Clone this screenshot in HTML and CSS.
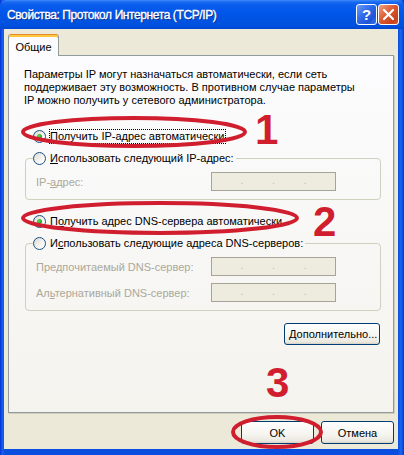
FILE: index.html
```html
<!DOCTYPE html>
<html lang="ru">
<head>
<meta charset="utf-8">
<title>Свойства: Протокол Интернета (TCP/IP)</title>
<link rel="stylesheet" href="styles.css">
</head>
<body>
<div class="window">
  <div class="titlebar">
    <span class="title">Свойства: Протокол Интернета (TCP/IP)</span>
    <div class="title-buttons">
      <span class="tbtn help">?</span>
      <span class="tbtn close"><svg width="13" height="13" viewBox="0 0 13 13"><path d="M2 2 L11 11 M11 2 L2 11" stroke="#fff" stroke-width="2.2" stroke-linecap="round"/></svg></span>
    </div>
  </div>
  <div class="client">
    <div class="tabs"><span class="tab">Общие</span></div>
    <div class="panel">
      <p class="intro">Параметры IP могут назначаться автоматически, если сеть<br>поддерживает эту возможность. В противном случае параметры<br>IP можно получить у сетевого администратора.</p>

      <div class="radio-row first"><span class="radio checked"></span><span class="label focus"><u>П</u>олучить IP-адрес автоматически</span></div>

      <fieldset class="group">
        <legend class="radio-row"><span class="radio"></span><span class="label"><u>И</u>спользовать следующий IP-адрес:</span></legend>
        <div class="field-row one"><span class="flabel">IP-<u>а</u>дрес:</span><span class="ipbox"><i>.</i><i>.</i><i>.</i></span></div>
      </fieldset>

      <div class="radio-row third"><span class="radio checked"></span><span class="label">П<u>о</u>лучить адрес DNS-сервера автоматически</span></div>

      <fieldset class="group">
        <legend class="radio-row"><span class="radio"></span><span class="label">И<u>с</u>пользовать следующие адреса DNS-серверов:</span></legend>
        <div class="field-row one"><span class="flabel">Пре<u>д</u>почитаемый DNS-сервер:</span><span class="ipbox"><i>.</i><i>.</i><i>.</i></span></div>
        <div class="field-row two"><span class="flabel">Ал<u>ь</u>тернативный DNS-сервер:</span><span class="ipbox"><i>.</i><i>.</i><i>.</i></span></div>
      </fieldset>

      <div class="adv-row"><button class="btn adv"><u>Д</u>ополнительно...</button></div>
    </div>
    <div class="dialog-buttons">
      <button class="btn">OK</button>
      <button class="btn">Отмена</button>
    </div>
  </div>

  <svg class="annot" width="404" height="455" viewBox="0 0 404 455">
    <ellipse cx="134" cy="132" rx="111" ry="14" fill="none" stroke="#D01E2E" stroke-width="4"/>
    <ellipse cx="160" cy="218" rx="137" ry="15" fill="none" stroke="#D01E2E" stroke-width="4"/>
    <ellipse cx="277" cy="432" rx="44" ry="15" fill="none" stroke="#D01E2E" stroke-width="4"/>
  </svg>
  <span class="num n1">1</span>
  <span class="num n2">2</span>
  <span class="num n3">3</span>
</div>
</body>
</html>
```
FILE: styles.css
```css
* { box-sizing: border-box; }

body {
  margin: 0;
  font-family: "Liberation Sans", Arial, sans-serif;
  font-size: 11px;
  color: #000;
  background: #fff;
}

.window {
  position: relative;
  width: 404px;
  height: 455px;
  display: flex;
  flex-direction: column;
  background: linear-gradient(to right, #0831D9 0, #166AEE 3px, #0A4EE0 4px, #0A4EE0 398px, #166AEE 401px, #0831D9 404px);
}

.titlebar {
  height: 29px;
  flex: none;
  display: flex;
  align-items: center;
  justify-content: space-between;
  padding: 0 5px 0 7px;
  background: linear-gradient(to bottom, #3D8AF7 0, #1A6BF2 2px, #0A5DEE 5px, #0057EA 12px, #0054E3 60%, #0050DE 90%, #0046CC 100%);
  border-radius: 6px 6px 0 0;
}

.title {
  color: #fff;
  font-family: "Liberation Sans", Arial, sans-serif;
  font-weight: normal;
  font-size: 12px;
  letter-spacing: -0.4px;
  -webkit-text-stroke: 0.35px #fff;
  text-shadow: 1px 1px 0 #0B2A86;
  margin-top: 1px;
}

.title-buttons {
  display: flex;
  gap: 1px;
}

.tbtn {
  width: 21px;
  height: 21px;
  border: 1px solid #fff;
  border-radius: 3px;
  display: flex;
  align-items: center;
  justify-content: center;
}

.help {
  background: linear-gradient(135deg, #6C9CFA 0, #2E68E8 45%, #1D55D6 75%, #3C75EE 100%);
  color: #fff;
  font-weight: bold;
  font-size: 15px;
}

.close {
  background: linear-gradient(135deg, #F0A285 0, #DC5A32 45%, #C8401C 80%, #D75A36 100%);
}

.client {
  flex: 1;
  margin: 0 6px 6px 4px;
  background: #ECE9D8;
  padding: 5px 4px 5px 4px;
  display: flex;
  flex-direction: column;
}

.tabs {
  display: flex;
  height: 21px;
  flex: none;
  position: relative;
  z-index: 1;
}

.tab {
  width: 51px;
  height: 22px;
  border: 1px solid #919B9C;
  border-top: 1px solid #E68B2C;
  border-bottom: none;
  border-radius: 3px 3px 0 0;
  background: #FCFCFE;
  box-shadow: inset 0 2px 0 #FFC83C;
  display: flex;
  align-items: center;
  justify-content: center;
  padding-top: 2px;
}

.panel {
  flex: none;
  height: 358px;
  border: 1px solid #919B9C;
  background: linear-gradient(#FCFCFE, #F4F3EE);
  box-shadow: 1px 1px 0 #D0CEBF;
  padding: 12px 12px 0 16px;
  display: flex;
  flex-direction: column;
}

.intro {
  margin: 0 0 0 -1px;
  line-height: 13px;
}

.radio-row {
  display: flex;
  align-items: center;
  height: 14px;
  padding-left: 8px;
  gap: 4px;
}

.radio-row.first { margin-top: 22px; }
.radio-row.third { margin-top: 14px; }

.radio {
  width: 13px;
  height: 13px;
  flex: none;
  border-radius: 50%;
  border: 1px solid #1C5180;
  background: linear-gradient(135deg, #DCD9CF 0, #F6F5F1 60%, #FFFFFF 100%);
  position: relative;
}

.radio.checked::after {
  content: "";
  position: absolute;
  left: 3px;
  top: 3px;
  width: 5px;
  height: 5px;
  border-radius: 50%;
  background: radial-gradient(circle at 35% 35%, #5EDB5E, #21A121 70%);
}

.label { white-space: nowrap; line-height: 13px; }

.focus {
  outline: 1px dotted #000;
  outline-offset: 0;
  padding: 0 1px 0 0;
}

.group {
  margin: 8px 0 0 0;
  border: 1px solid #D0D0BF;
  border-radius: 4px;
  padding: 0 7px 8px 7px;
  min-width: 0;
}

.group legend.radio-row {
  padding: 0 2px 0 0;
  margin: 0;
}

.field-row {
  display: flex;
  align-items: center;
  height: 19px;
  padding-left: 3px;
  color: #ACA899;
}

.field-row.one { margin-top: 7px; }
.field-row.two { margin-top: 7px; }

.flabel {
  width: 175px;
  flex: none;
  white-space: nowrap;
}

.ipbox {
  width: 125px;
  height: 19px;
  border: 1px solid #A5A597;
  background: #EEEBDF;
  display: flex;
  justify-content: space-evenly;
  align-items: center;
  padding: 0 0 4px 0;
}

.ipbox i {
  font-style: normal;
  color: #C5C2B2;
  font-size: 11px;
}

.adv-row {
  display: flex;
  justify-content: flex-end;
  margin-top: 12px;
  padding-right: 1px;
}

.btn {
  height: 22px;
  border: 1px solid #003C74;
  border-radius: 3px;
  background: linear-gradient(#FFFFFF 0, #F5F4EF 60%, #EAE8DF 90%, #D6D0C5 100%);
  font-family: "Liberation Sans", Arial, sans-serif;
  font-size: 11px;
  color: #000;
  padding: 0 4px;
}

.adv { width: 96px; }

.dialog-buttons {
  display: flex;
  justify-content: flex-end;
  gap: 7px;
  margin-top: 8px;
}

.dialog-buttons .btn {
  width: 73px;
  height: 23px;
}

.annot {
  position: absolute;
  left: 0;
  top: 0;
  pointer-events: none;
}

.num {
  position: absolute;
  font-family: "Liberation Sans", Arial, sans-serif;
  font-weight: bold;
  font-size: 42px;
  line-height: 42px;
  color: #D01E2E;
}

.n1 { left: 255px; top: 109px; }
.n2 { left: 313px; top: 201px; }
.n3 { left: 266px; top: 362px; }
```
